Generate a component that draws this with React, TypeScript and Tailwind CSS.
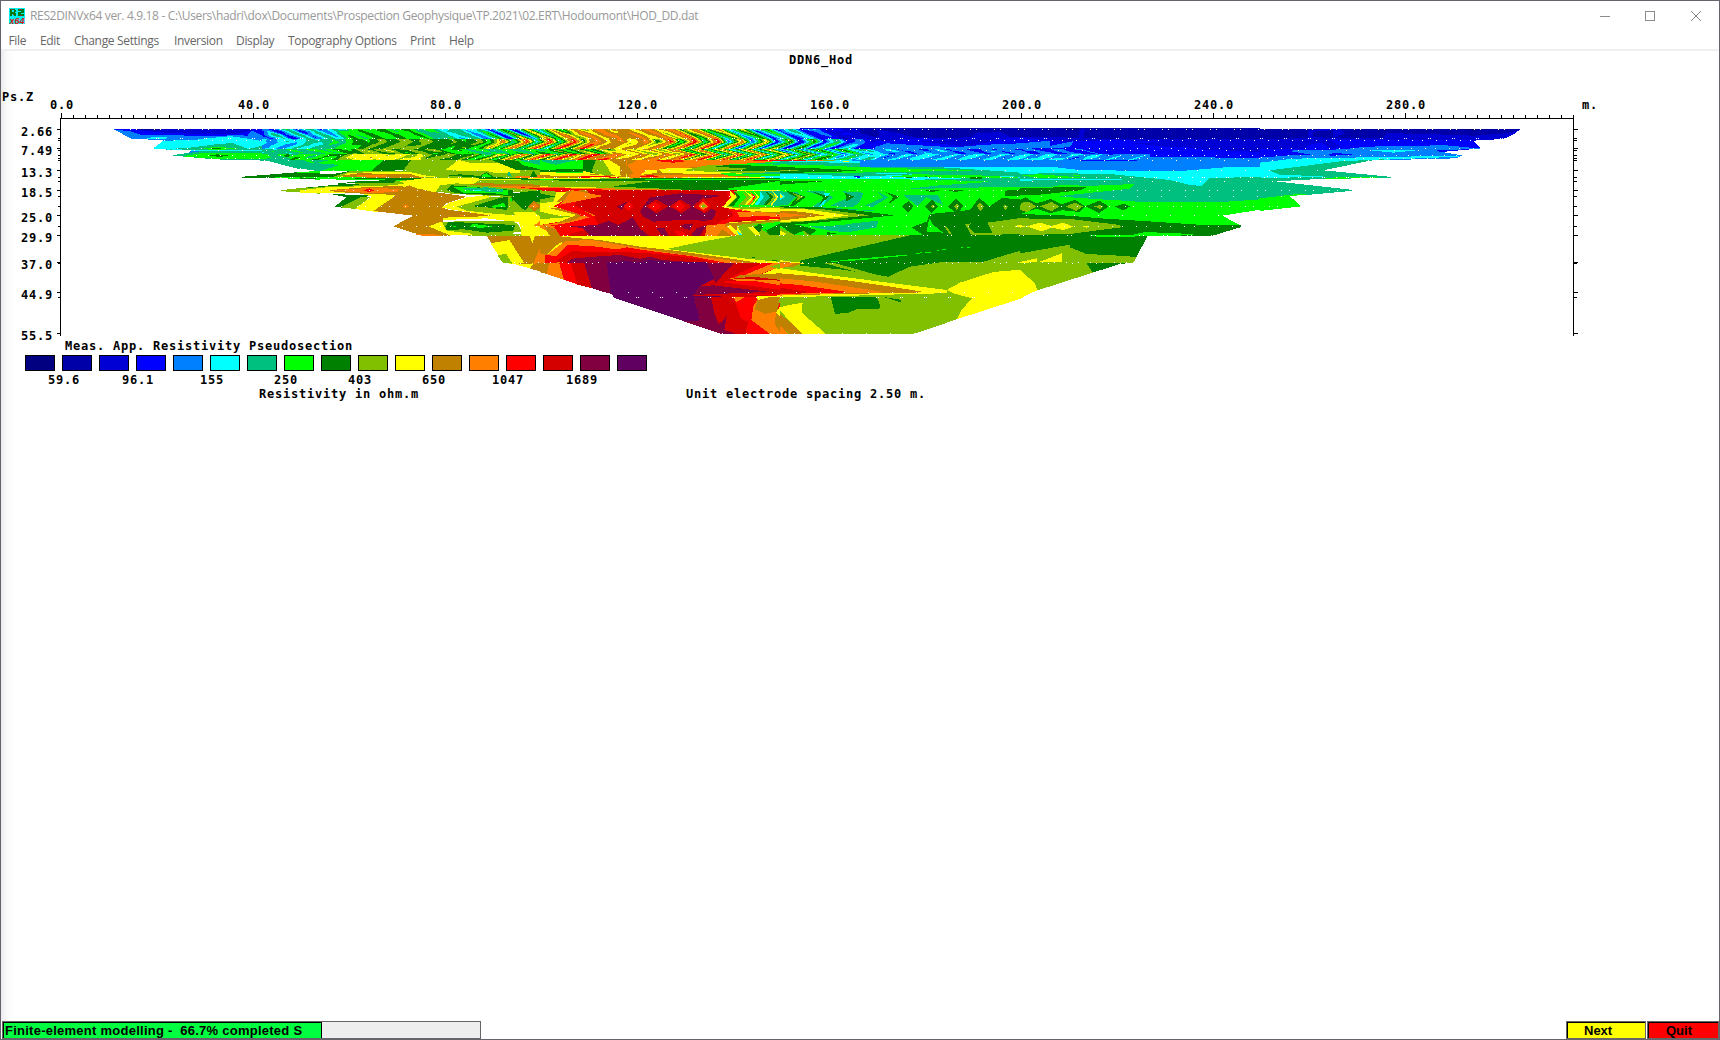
import React from "react";

const COLORS = [
  "#000080", "#0000a8", "#0000d4", "#0000ff", "#0080ff", "#00ffff", "#00c080", "#00ff00", "#008000",
  "#80c000", "#ffff00", "#c08000", "#ff8000", "#ff0000", "#d40000", "#800040", "#600060",
];
const KEYS = "abcdefghijklmnopq";
const color = (k: string) => (k === "w" ? "#ffffff" : COLORS[KEYS.indexOf(k)]);

/* Contour polygons, stored per tile in thirds of a pixel: "<level> x,y x,y ..." */
type Tile = { x: number; y: number; shapes: string };

const TILES: Tile[] = [
  {
    x: 0, y: 90, shapes: `
e 340,118 900,118 900,212 640,200 500,181 490,151 395,146
d 340,118 900,118 900,150 840,165 760,140 720,135 640,138 520,136 420,134 390,124
c 390,118 760,118 740,127 700,132 560,131 460,126
b 400,118 480,118 470,122
d 380,118 410,118 400,122
f 460,175 490,152 610,150 690,138 770,150 850,170 900,165 900,185 470,178
f 440,146 455,142 500,142 498,147
f 585,150 630,143 670,142 700,148
e 740,140 755,122 800,142 850,158 835,166 780,150
g 505,177 580,172 660,161 700,160 745,177 800,164 830,178 900,172 900,186 520,181
h 608,176 650,170 715,176 640,181
i 625,176 660,174 665,177
w 470,179 580,179 560,191 516,195
f 505,178 660,180 900,182 900,185 620,184
g 513,196 600,184 900,184 900,238 800,212 640,208
h 545,199 600,190 660,188 800,190 815,203 790,208 650,207
i 628,197 650,193 688,196 660,201
h 830,196 850,186 900,190 960,195 960,220 930,210 880,206
i 850,197 862,191 872,198 860,202
i 835,175 845,168 865,176 845,180
h 810,150 825,125 835,138 890,150 860,148
f 800,118 820,118 835,145 825,142
g 805,210 960,207 960,242
h 900,204 960,205 960,220
i 726,263 730,260 900,246 960,243 960,264 820,264
h 860,250 960,242 960,250
h 820,262 960,262 960,269 870,266
j 842,302 846,300 900,294 960,289 960,311 860,305
k 900,301 960,295 960,306` },
  {
    x: 300, y: 110, shapes: `
g 0,117 250,117 250,181 50,183 0,175
h 0,118 90,125 0,135
h 0,140 20,145 45,160 90,150 260,147 230,183 60,183 120,165 30,158 0,146
i 250,150 335,150 310,181 215,183
j 335,148 722,148 722,245 20,245 120,224 300,210 310,181
k 435,181 475,150 510,158 600,160 660,178 660,190 590,190 560,183
i 570,148 722,155 722,181 650,180 620,168
g 650,148 722,148 722,176 690,160
h 650,150 722,165 722,178 670,166
i 0,192 100,192 150,183 330,182 310,195 250,206 0,206
j 100,200 150,184 330,182 450,186 460,204 100,204
k 120,202 145,188 330,186 385,198 440,202
l 130,196 175,190 330,192 370,203 130,203
m 205,195 255,195 262,202 150,202
m 165,195 190,195 185,200
i 440,196 480,193 540,198 560,186 580,200 640,205 560,205
h 545,195 560,190 575,200 545,202
g 620,195 627,184 636,200
m 640,200 722,195 722,204 650,205
i 690,200 700,182 712,200
h 0,202 120,202 420,204 300,212 80,208
i 120,204 440,204 430,207 300,210 180,206
i 150,214 290,210 280,218 110,221
g 140,213 175,214 160,217
w 0,207 170,214 110,221 0,234
i 20,233 130,222 190,224 60,235
k 375,204 722,204 722,222 400,225 290,216
i 470,203 722,206 722,209 600,208
j 540,210 722,210 722,225 520,222
l 430,222 560,220 722,224 722,240 650,232 520,226
m 500,226 722,230 722,240
n 660,232 722,234 722,240
j 0,236 80,229 420,220 440,245 0,249
k 0,241 80,232 280,226 400,205 425,218 405,250 0,248
l 80,241 200,231 300,228 380,240 400,252 300,258 110,246
m 100,241 220,233 310,238 300,246 205,249 130,244
m 120,241 150,236 160,246
n 190,241 208,235 222,241 208,247
k 0,243 60,236 90,241 80,248 10,246
j 430,225 470,220 560,228 640,238 640,262 440,250 410,240
i 440,240 455,226 640,240 640,258 470,250
h 462,232 500,230 625,240 625,256 570,248 490,248
g 480,236 560,232 610,238 610,247 520,243
f 520,241 545,240 540,244
i 102,291 140,262 90,252 210,256 130,293
j 120,292 180,262 210,262 165,297
k 165,297 215,260 190,253 320,254 230,306
l 220,303 280,262 300,235 330,226 360,240 500,260 440,280 425,292 450,300 580,316 560,325 430,325 430,335 385,350 440,362 450,378 370,378 280,349 340,317
m 308,289 316,282 328,290 316,295
m 480,315 494,317 480,319
m 335,371 400,373 435,378 370,378
k 400,252 500,262 560,256 590,265 520,290 460,300 425,292 450,278 500,262
k 450,298 520,288 720,300 722,345 640,335 560,325 430,330 430,323 580,318
j 470,290 570,262 640,258 722,255 722,320 590,312 500,302
i 518,289 600,264 625,260 622,300 560,292
h 575,289 612,278 618,291 580,293
i 640,250 722,240 722,275 700,278 675,300 650,285 632,268
h 628,270 634,262 640,280
j 625,310 630,280 640,270 665,295 700,310 690,320
k 640,305 700,305 722,320 722,345 660,345
l 683,289 703,272 722,286 722,292 703,304
m 690,289 703,280 716,289 703,295
j 400,349 430,335 640,332 655,345 665,365 600,372 520,375 440,366
i 436,350 445,335 540,340 645,345 640,362 560,368 490,358 440,360
h 508,349 520,342 580,349 540,354
h 445,349 455,346 470,350
k 385,349 425,335 440,362 530,373 450,376
j 500,376 600,368 722,376 722,378 500,378
k 660,340 722,330 722,378 665,378
m 700,349 722,330 722,349
l 560,377 722,377 722,482 645,463 610,458
k 572,400 628,390 672,458 645,463 610,458
j 593,436 618,431 637,461 608,458
k 688,374 697,402 706,374
m 700,460 725,404 722,482
k 645,463 690,462 700,460 690,475
l 690,476 712,458 722,460 722,484` },
  {
    x: 540, y: 110, shapes: `
k 0,147 722,147 722,210 0,210
k 0,370 722,370 722,460 0,460
o 450,458 722,458 722,672 545,672 478,650 450,600
h 0,148 130,148 130,190 0,186
g 5,150 112,150 48,164 10,156
i 128,148 170,148 158,190 130,182
i 0,180 130,176 130,187 0,187
j 155,185 168,148 202,152 222,198 160,190
k 188,149 225,158 245,190 235,198 215,192
l 205,148 270,148 258,200 240,196 240,170
m 258,148 722,148 722,190 320,180 300,196 262,200
n 345,150 455,152 400,158 370,156
l 262,148 290,152 262,165 280,190 260,200
m 570,148 722,148 722,160 560,162
n 630,149 722,148 722,152 640,152
l 350,180 560,164 722,156 722,200 350,200
k 355,176 500,173 722,166 722,198 600,192 370,190
j 430,181 500,166 722,160 722,192 520,186
i 508,168 722,160 722,182 560,172
h 540,165 722,155 722,170 620,166
g 620,162 722,157 722,164
f 690,155 722,152 722,156
i 470,184 722,174 722,182
l 0,190 200,194 260,200 340,190 600,200 0,204
k 0,190 130,192 240,200 0,196
n 110,200 190,197 240,203 120,203
m 280,195 560,196 600,202 270,203
n 300,197 340,196 360,201 300,201
g 600,190 722,186 722,196 660,196
h 540,190 722,192 722,202 570,198
f 630,201 722,197 722,204
j 0,204 722,204 722,240 0,240
k 0,204 200,202 240,205 0,207
h 0,207 330,206 300,209 0,209
i 0,209 400,204 722,204 722,242 480,241 210,229 335,214 0,211
j 0,213 335,214 210,230 0,229
h 300,207 722,207 722,209 320,209
h 560,236 722,212 722,245 575,242
k 0,229 240,234 0,236
m 0,231 200,235 480,241 0,242
n 0,234 250,238 0,240
n 0,240 500,240 580,245 590,378 0,378
o 130,244 230,240 570,243 575,262 550,290 580,318 520,345 500,378 70,378 75,340 170,320 100,289
j 0,241 50,245 60,260 30,280 0,280
i 0,250 46,260 0,268
k 50,246 110,244 100,262 70,272 50,285 0,300 0,280 40,275
l 80,244 140,240 150,255 90,270 50,276
m 95,240 190,258 120,272 60,284 70,275
k 0,300 40,285 120,312 80,332 0,345
j 0,305 60,318 100,320 0,328
l 30,295 90,296 140,330 90,345 0,352 60,335 110,315
m 60,296 100,289 165,316 100,350 0,378 0,345 90,335 130,316
n 40,289 100,284 160,318 180,350 60,378 70,350 15,349 80,340 150,322
n 46,289 100,286 105,293 80,296
n 60,376 40,350 90,350 90,378
k 0,352 20,362 40,378 0,378
l 10,345 50,360 60,378 30,378
p 300,304 330,262 420,250 545,257 490,268 520,300 572,316 500,332 420,330 340,335 310,320
p 230,289 262,275 245,300
o 318,289 348,268 385,289 350,310
n 325,289 345,275 365,290 345,303
o 388,289 420,268 455,289 425,310
n 398,289 418,272 435,290 420,303
o 458,290 490,262 525,289 495,310
n 468,289 490,266 512,289 492,306
m 476,289 490,275 504,289 490,300
j 484,289 490,282 498,289 490,295
n 250,289 268,274 280,289 268,303
p 90,349 170,345 205,333 235,345 278,322 300,355 328,378 150,378 130,355
p 350,355 375,355 385,378 365,376
p 420,345 460,340 450,360 430,355
p 470,355 500,345 480,378 450,376
n 400,360 430,365 440,378 415,378
k 575,240 722,240 722,378 590,378
o 545,262 570,241 590,241 585,262 560,300 780,330 540,340 520,378 500,378
n 560,245 585,244 590,262 565,290 590,300 722,312 722,335 590,330 540,345 520,378 505,378 520,345 580,318
m 555,292 640,302 722,311 722,320 600,320 700,316
k 545,290 570,275 590,245 722,245 722,302 640,300 560,295
j 560,290 590,262 580,243 722,243 722,298 600,292
g 600,244 722,243 722,295 610,288
h 590,243 660,243 670,258 650,288 580,290 600,262
k 570,243 590,260 560,289 550,289 572,262
i 580,243 605,260 580,289 565,289 592,262
h 590,243 613,260 590,289 580,289 600,262
j 605,243 632,260 612,289 592,289 620,262
k 615,243 642,260 620,289 610,289 632,262
m 628,245 650,260 626,289 618,289 640,262
n 637,252 647,260 640,270 640,262
k 640,243 658,260 635,289 628,289 652,262
f 660,243 672,260 650,289 640,289 660,262
i 676,243 702,260 676,289 666,289 690,262
j 685,243 708,260 684,289 676,289 700,262
k 696,243 716,260 694,289 688,289 708,262
h 600,285 722,287 722,292 600,291
j 570,292 722,290 722,300 640,300
k 600,296 722,295 722,308 640,306
m 590,305 722,309 722,320 600,322
l 640,304 722,306 722,312
n 520,335 620,320 722,316 600,330
k 560,338 722,326 722,378 560,378
l 520,360 560,340 722,328 722,335 590,348 590,378 500,378
m 500,345 560,342 530,378 495,378
j 590,345 722,332 722,378 610,378
h 640,345 722,335 722,378 700,378
i 630,360 660,340 680,360 722,340 722,378 690,378 670,350 650,378
k 640,350 665,378 650,378 620,350
k 570,345 610,378 592,378 560,350
m 560,350 590,378 575,378 545,355
f 590,362 612,378 600,378
l 0,377 62,377 78,390 50,405 20,436 0,430
k 60,377 600,377 380,415 722,455 722,460 640,460
j 380,417 480,396 590,376 722,376 722,456 620,446
i 630,441 650,443 640,444
i 680,450 722,452 722,454
l 62,380 180,390 300,410 420,424 560,444 660,459 500,459 80,440
m 0,430 20,435 78,392 160,391 290,413 420,433 560,450 620,460 0,460
n 15,435 50,438 82,405 155,408 230,418 260,412 330,423 450,438 560,459 16,459
o 50,452 95,424 150,425 230,425 360,432 470,446 530,459 50,459
p 80,459 95,446 190,438 240,435 300,446 330,440 370,450 440,455 480,459
q 220,459 240,454 300,455 330,450 380,455 500,458
l 0,459 28,459 30,470 20,492 0,487
m 28,459 60,457 75,510 20,492
n 57,458 95,458 115,524 72,510
o 92,458 132,458 160,536 112,524
p 132,458 202,458 216,552 195,547 156,535
q 200,457 502,457 525,505 480,528 545,560 462,562 480,628 472,632 440,634 430,633 225,565 212,550
p 500,459 585,459 600,478 570,505 525,518 520,500
o 583,459 668,459 650,480 640,490 580,515 520,525 530,515
n 668,459 705,459 660,495 570,505 600,488
m 700,459 722,459 722,470 640,500 590,505
k 660,494 722,470 722,490
j 690,470 722,460 722,478
l 600,495 722,490 722,510 640,500 580,505
m 570,505 722,512 722,530 600,516
n 550,512 640,512 722,526 722,542 560,522
o 520,522 560,518 722,540 722,552 600,552 480,530
p 478,529 520,526 700,547 600,552 460,557
o 460,555 722,544 722,555 460,558
n 560,555 722,551 722,557
k 640,560 722,556 722,562 600,562
p 462,560 515,560 530,620 540,642 560,618 553,660 590,672 545,672 428,633 474,632 480,628
n 580,562 722,562 722,672 620,672
o 512,560 585,560 560,614 536,642 525,615
o 565,612 625,635 615,672 555,655
m 578,562 615,560 590,576
m 640,590 655,562 712,606 705,640 742,672 690,672 634,630
l 655,562 722,562 712,604 675,612 645,598
k 648,560 690,561 655,570
j 722,562 722,585 715,575
k 722,585 722,620 708,608
l 708,608 722,620 722,672 704,640
l 704,632 722,640 722,655` },
  {
    x: 780, y: 110, shapes: `
h 0,238 722,238 722,378 0,378
f 0,146 722,146 722,205 0,205
e 160,146 722,146 722,155 520,165 460,153 380,165 260,156
f 455,155 480,140 640,148 722,168 722,184 560,176
e 700,154 722,145 722,175
n 0,148 60,149 80,152 0,155
m 40,150 160,151 120,153
j 120,148 170,152 220,154 130,152
k 188,154 207,154 207,156 188,156
m 242,156 254,156 254,158 242,158
g 0,154 100,156 320,163 500,173 610,180 722,188 722,215 0,215
h 0,163 120,166 280,173 600,181 300,187 0,190
i 0,171 90,174 235,181 150,187 0,188
j 0,180 60,181 20,184 0,184
f 0,193 220,192 400,188 722,188 722,204 0,204
g 0,190 60,190 320,192 400,190 722,188 722,200 400,193 240,200
h 330,200 400,193 580,195 722,203 500,203
i 365,201 400,201 390,204
i 420,201 440,199 450,203
i 570,202 605,202 605,207 570,206
d 222,199 240,199 240,203 222,202
f 0,204 722,206 722,209 0,208
h 0,208 360,208 722,214 722,245 0,245
g 420,208 722,208 722,231 560,233 370,238 480,226 640,215
i 0,213 132,214 0,224
f 0,200 40,200 40,205 0,205
g 80,244 130,244 160,262 120,292 95,292 140,262
g 0,244 60,248 20,289 0,289
g 190,244 250,248 240,275 220,292 150,288 205,262
g 290,244 325,262 280,290 250,289 310,262
g 370,255 475,256 490,286 440,262 412,288
f 130,248 150,248 130,285 118,290 138,262
f 0,248 15,260 0,270
k 0,252 8,260 0,266
i 20,242 78,260 40,289 28,289 50,262 25,250
j 35,248 70,260 45,275 55,262
i 95,244 148,260 120,282 130,262
i 195,248 222,260 200,274
i 315,245 358,260 325,282 340,262
i 365,289 385,274 400,289 385,308
i 435,290 455,268 475,290 455,310
j 452,289 460,284 466,290 460,295
i 505,290 527,265 550,289 530,312
j 522,289 530,280 538,289 530,300
i 570,300 598,263 628,290 665,264 722,268 722,376 430,376 395,352 395,330 450,312
j 590,289 600,278 612,289 602,304
j 668,289 676,284 684,290 676,300
j 718,289 722,287 722,292
i 675,242 722,238 722,258 675,257
i 434,240 478,241 455,247
i 500,240 552,241 527,246
h 0,285 300,300 400,310 450,312 440,335 395,352 430,376 0,376
g 0,289 130,292 290,302 300,304 180,298
i 0,289 110,291 200,298 345,316 200,330 90,340 0,347
j 0,292 130,298 270,316 130,330 0,340
k 0,296 80,298 208,316 90,332 0,336
l 0,302 60,305 135,316 60,325 0,332
m 0,308 80,316 0,323
g 90,349 180,346 220,340 295,332 290,352 200,367 150,362
i 0,345 60,346 110,360 90,376 70,362 40,376 20,360
j 0,352 20,362 45,376 0,376
k 0,362 20,372 10,376 0,376
j 68,360 90,376 75,376
i 142,366 178,372 142,374
h 440,365 448,325 460,345 490,368
j 490,345 500,350 518,376 508,372
j 555,342 575,340 565,350 590,376 572,372
j 622,338 722,324 722,372 575,376 578,368 635,368
i 595,338 622,338 636,366 590,362
k 700,349 722,344 722,352
j 0,376 722,376 722,672 0,672
i 60,452 390,376 722,376 722,422 700,428 605,457 480,457 390,470 325,500 180,478 60,467
j 130,459 160,458 310,500 290,502
h 130,457 210,448 380,434 380,437 250,450
h 408,429 426,427 426,430 408,432
h 436,426 452,425 452,428 436,429
h 462,422 478,421 478,423 462,424
h 487,418 497,418 497,420 487,420
h 514,416 523,416 523,418 514,418
h 538,413 550,412 550,414 538,415
h 562,411 571,410 571,413 562,413
h 587,408 596,407 596,409 587,409
k 722,456 722,460 720,459
k 0,450 40,456 80,459 0,475
l 0,456 68,459 20,478 0,478
m 0,459 45,459 20,472 0,474
j 0,474 30,470 70,480 0,480
k 0,474 120,492 500,540 500,550 0,557
l 0,490 120,500 300,525 440,547 0,556
m 0,505 100,514 320,547 0,554
n 0,520 60,525 210,547 0,552
o 0,533 95,547 0,550
m 0,553 50,553 0,557
k 0,557 500,548 300,555 0,562
k 500,540 540,518 640,486 722,479 722,567 530,628 545,600 575,565 520,550
i 152,560 290,560 300,585 298,597 235,596 205,608 165,612
i 308,560 365,570 362,577
k 0,590 68,578 65,608 138,672 60,672 0,600
l 0,612 45,648 68,672 30,672 0,650
m 0,645 25,672 0,672
j 0,562 20,562 10,590 0,590
w 402,672 530,628 722,566 722,680 402,680` },
  {
    x: 1020, y: 110, shapes: `
e 0,135 722,142 722,190 0,190
f 0,160 180,180 470,184 722,163 722,245 0,215
g 0,192 110,189 280,193 450,210 510,225 545,228 570,203 722,202 722,300 0,300
h 0,195 60,193 200,204 60,205
h 160,195 180,195 180,199 160,199
f 0,206 295,208 440,214 0,212
g 0,209 380,210 440,214 100,216
h 0,231 200,228 345,222 330,236 110,259 200,264 350,275 620,275 722,268 722,302 610,317 670,346 0,380
h 115,225 200,226 115,228
g 120,260 260,255 330,236 360,260 480,265 360,274 240,268
i 0,234 200,231 180,241 60,254 0,256
i 0,270 16,262 50,280 92,267 125,283 165,269 195,289 170,313 130,300 90,310 50,296 0,312
j 0,289 5,278 25,275 50,289 22,306 0,300
j 60,289 95,276 118,289 95,304
j 138,289 165,278 190,289 168,303
i 195,289 238,272 266,289 238,309
j 222,289 240,285 250,290 240,297
i 285,290 312,281 330,290 310,301
h 80,316 150,302 200,310 180,322
i 0,312 150,317 240,325 400,335 550,345 664,345 664,351 575,378 383,378 340,458 300,462 218,488 180,460 0,460
j 0,325 160,328 300,345 305,352 240,360 150,372 0,375
k 20,349 60,338 95,348 130,338 160,350 130,360 95,353 65,364
k 0,345 18,350 0,353
k 188,349 200,347 210,350 200,353
h 205,376 340,374 375,366 520,372 518,375 450,378 240,381
j 0,430 70,418 148,404 150,412 200,432 280,436 350,441 340,458 200,460 218,488 50,542 0,560
k 0,456 50,445 52,455 0,460
k 60,455 125,430 125,457
k 0,480 45,520 52,542 30,550 0,567
w 0,568 35,548 218,490 340,460 383,380 383,400 722,400 722,600 0,600
w 722,299 607,317 668,350 578,378 722,378` },
  {
    x: 1260, y: 90, shapes: `
c 0,116 785,116 760,133 730,147 640,152 664,175 0,180
b 0,116 785,116 740,130 640,137 480,131 380,130 370,144 0,146
c 145,120 240,116 255,130 220,145 145,147
b 160,125 220,120 220,145 160,140
a 610,117 660,117 640,122
d 0,178 140,178 145,165 220,150 635,150 664,175 500,190 0,202
c 180,153 215,150 240,170 210,176
e 0,203 100,195 160,195 80,182 250,178 300,172 370,168 560,166 665,176 520,182 608,196 590,205 0,220
d 205,195 220,188 290,195 210,197
f 330,181 470,181 400,188
f 0,218 100,206 590,197 600,200 330,211 190,241 0,262
g 30,241 240,214 390,207 330,212 190,241 398,261 390,263 160,268 45,274 280,300 270,303 150,314 90,318 0,326 0,262 65,258
f 50,256 188,257 188,262 0,263
h 195,263 250,262 395,261 250,266 195,267
h 0,325 120,311 150,312 90,319 124,349 0,363` },
];

/* Shallow-level apparent resistivity: per row [x, low level, high level] stops. */
type Stop = [number, number, number];
const BANDS: { y0: number; y1: number; jitter: number; slant: (t: number) => number; stops: Stop[] }[] = [
  {
    y0: 129, y1: 139, jitter: 1.6, slant: (t) => 4 + 24 * t,
    stops: [[262, 3, 4.4], [272, 3, 6.5], [295, 3, 6.5], [335, 4, 6.5], [350, 6.6, 8], [400, 7, 8.4], [430, 6.4, 7.8], [442, 5.2, 6.6],
      [480, 4, 6.4], [492, 3, 8], [520, 2.4, 10.5], [545, 5, 11], [570, 8, 12], [595, 10, 12.6], [615, 10.8, 11.8],
      [650, 10, 12], [675, 9, 12.6], [700, 7, 12.4], [720, 5, 11.4], [750, 4, 9.5], [780, 3, 7], [810, 2.4, 5], [840, 2, 3.2], [860, 1.6, 2.4]],
  },
  {
    y0: 139, y1: 149, jitter: 1.6, slant: (t) => (t < 0.25 ? 26 + t * 12 : 29 - (t - 0.25) * 26),
    stops: [[262, 4, 5.4], [300, 4.6, 5.8], [335, 6, 7], [360, 7.4, 8.6], [400, 8.4, 9.6], [430, 8, 8.8], [470, 7.4, 8.6],
      [485, 7, 10], [510, 6, 12.5], [545, 5, 13.5], [580, 8, 14], [600, 10.6, 12.2], [640, 10, 11.6], [675, 7, 13],
      [700, 6, 14], [730, 4, 13], [760, 3, 11], [800, 2.7, 9], [835, 2.6, 7], [860, 2.5, 4.2], [875, 2.2, 3.2]],
  },
  {
    y0: 149, y1: 154, jitter: 2, slant: (t) => 6 + 20 * t,
    stops: [[262, 5.4, 6.4], [320, 6, 7], [360, 8, 9.4], [430, 8, 9.4], [460, 7, 8.4], [490, 6, 7.4], [540, 6, 8],
      [600, 7, 10], [620, 10, 11], [670, 9, 12], [700, 6, 12], [750, 5, 12], [790, 4, 10], [860, 4, 7], [880, 3.6, 4.8], [960, 3.4, 4.6], [1100, 3.2, 4.2]],
  },
  {
    y0: 154, y1: 160, jitter: 1.8, slant: (t) => 26 - 20 * t,
    stops: [[290, 6.4, 7.4], [330, 7, 8.4], [355, 9.6, 10.4], [420, 9.6, 10.4], [426, 8.6, 9.3], [470, 7.6, 9], [490, 6, 10.5],
      [520, 7, 12], [560, 8, 13.6], [600, 11, 13.4], [625, 10, 12], [670, 10, 12.6], [700, 7, 13.5], [750, 5, 13],
      [800, 5, 10], [850, 4.6, 7], [880, 4, 5.4], [960, 4, 5.4], [1100, 4, 5.2], [1150, 3.6, 4.6]],
  },
];

/* Smooth value noise; spreads cells widely along x and tightly along depth. */
const hash = (i: number, j: number) => {
  const v = Math.sin(i * 127.1 + j * 311.7) * 43758.5453;
  return v - Math.floor(v);
};
const noise = (x: number, y: number) => {
  const i = Math.floor(x);
  const j = Math.floor(y);
  const u = x - i;
  const v = y - j;
  const top = hash(i, j) * (1 - u) + hash(i + 1, j) * u;
  const bottom = hash(i, j + 1) * (1 - u) + hash(i + 1, j + 1) * u;
  return top * (1 - v) + bottom * v - 0.5;
};

function contourRuns() {
  const paths: string[] = COLORS.map(() => "");
  for (const band of BANDS) {
    const { stops } = band;
    const first = stops[0][0];
    const last = stops[stops.length - 1][0];
    for (let y = band.y0; y < band.y1; y++) {
      const t = (y - band.y0) / (band.y1 - band.y0);
      let start = first;
      let prev = -1;
      for (let x = first; x <= last; x++) {
        let i = 0;
        while (i < stops.length - 2 && stops[i + 1][0] < x) i++;
        const f = (x - stops[i][0]) / (stops[i + 1][0] - stops[i][0]);
        const lo = stops[i][1] + f * (stops[i + 1][1] - stops[i][1]);
        const hi = stops[i][2] + f * (stops[i + 1][2] - stops[i][2]);
        const p = ((((x - band.slant(t) - 4) % 24) + 24) % 24) / 24;
        const wave = p < 0.6 ? p / 0.6 : (1 - p) / 0.4;
        const amp = Math.min(1, 0.45 + (hi - lo) / 5);
        const value = lo + (hi - lo) * wave + 0.3 + band.jitter * amp * noise(x / 14, y / 3.2);
        const level = x === last ? -1 : Math.max(0, Math.min(14, Math.floor(value)));
        if (level !== prev) {
          if (prev >= 0) paths[prev] += `M${start} ${y}h${x - start}v1h${start - x}z`;
          start = x;
          prev = level;
        }
      }
    }
  }
  return paths;
}
const RUNS = contourRuns();

/* Blue upper levels on the right flank, drawn under the wave bands. */
const UPPER = `
c 2400,385 3780,385 3780,480 2400,480
b 2520,385 3780,385 3780,416 3300,416 3180,412 2900,412 2780,416 2620,410
a 3180,385 3240,385 3230,392
c 2630,388 2640,400 2630,415 2760,416 2700,400
c 2900,416 2930,400 3000,396 3030,408 3010,416
c 3240,388 3256,386 3250,414 3236,414
d 2500,418 2640,424 2760,414 2900,420 3060,414 3200,425 3330,420 3480,424 3600,448 3780,456 3780,480 2400,480
c 2760,424 2900,440 3000,418 2860,418
c 3400,430 3520,424 3780,425 3780,450 3500,440
e 2580,455 2660,430 2760,436 2860,442 2960,434 3060,430 3150,422 3150,438 3220,424 3210,442 3080,446 3240,462 3420,470 3780,474 3780,500 2580,500
f 2630,452 2700,446 2660,470
f 2670,460 2780,450 2740,468
f 2840,454 2900,448 2850,460
f 2580,466 2700,462 2900,466 3080,456 3260,470 3340,480 2580,480
d 3085,451 3160,450 3180,455 3090,456
g 3070,472 3110,468 3130,475 3100,478
g 3160,474 3200,472 3200,478
d 3240,480 3410,480 3410,483 3240,483`;

type DotRow = [number, number[], number, number];
const DOTS: DotRow[] = [
  [129, [67, 13], 130, 1505], [138, [1, 7], 140, 1505], [140, [55, 25], 150, 1490], [148, [20, 62], 165, 1480],
  [150, [41], 190, 1440], [155, [47, 11], 190, 1460], [158, [70, 20], 200, 1440], [160, [37], 220, 1400],
  [170, [28], 300, 1340], [177, [41, 47, 13], 260, 1380], [181, [37], 480, 1285], [190, [64, 16], 300, 1350], [196, [64], 355, 1300],
  [206, [28, 52], 340, 1290], [215, [61], 412, 800], [215, [19], 800, 1230], [226, [61, 19], 395, 1240],
  [235, [70, 9], 425, 1215], [262, [31, 67], 500, 1130], [263, [13], 500, 1130], [292, [49], 605, 1035],
  [297, [1, 7], 620, 980], [333, [43], 720, 915],
];
const dotPath = DOTS.map(([y, offs, from, to]) => {
  let d = "";
  for (const o of offs) for (let x = Math.round(o / 3) + 12; x < to; x += 24) if (x >= from) d += `M${x} ${y}h1v1h-1z`;
  return d;
}).join("");

const parse = (s: string) =>
  s.trim().split("\n").map((l) => ({ fill: color(l[0]), points: l.slice(2) }));

const LABELED: [string, number, number][] = [
  ["2.66", 129, 136], ["7.49", 148, 155], ["13.3", 170, 177], ["18.5", 190, 197], ["25.0", 215, 222],
  ["29.9", 235, 242], ["37.0", 262, 269], ["44.9", 292, 299], ["55.5", 333, 340],
];
const MINOR = [138, 140, 150, 155, 158, 160, 177, 181, 196, 206, 226, 263, 297];

const MONO =
  "font-['DejaVu_Sans_Mono','Liberation_Mono',monospace] font-bold text-[12px] tracking-[0.775px] whitespace-pre text-black";

function Pseudosection() {
  return (
    <svg width="1718" height="291" viewBox="1 51 1718 291" className={`block shrink-0 ${MONO}`} shapeRendering="crispEdges">
      <g fill="#000">
        <text x="789" y="64">DDN6_Hod</text>
        <text x="2" y="101">Ps.Z</text>
        <text x="1582" y="109">m.</text>
        {Array.from({ length: 8 }, (_, i) => (
          <text key={i} x={62 + 192 * i} y="109" textAnchor="middle">{(i * 40).toFixed(1)}</text>
        ))}
        {LABELED.map(([t, , y]) => (
          <text key={t} x="21" y={y}>{t}</text>
        ))}
      </g>
      <g fill="#000">
        <rect x="60" y="118" width="1514" height="1" />
        <rect x="60" y="118" width="1" height="218" />
        <rect x="1573" y="115" width="1" height="221" />
        {Array.from({ length: 127 }, (_, i) => {
          const h = i % 16 === 0 ? 5 : 3;
          return <rect key={i} x={61 + i * 12} y={118 - h} width="1" height={h} />;
        })}
        {LABELED.map(([t, y]) => (
          <g key={t}>
            <rect x="57" y={y} width="3" height="1" />
            <rect x="1574" y={y} width="4" height="1" />
          </g>
        ))}
        {MINOR.map((y) => (
          <g key={y}>
            <rect x="58" y={y} width="2" height="1" />
            <rect x="1574" y={y} width="3" height="1" />
          </g>
        ))}
      </g>
      {TILES.map((tile) => (
        <g key={tile.x} transform={`translate(${tile.x} ${tile.y}) scale(${1 / 3})`}>
          {parse(tile.shapes).map((s, i) => (
            <polygon key={i} fill={s.fill} points={s.points} />
          ))}
        </g>
      ))}
      <g transform={`scale(${1 / 3})`}>
        {parse(UPPER).map((s, i) => (
          <polygon key={i} fill={s.fill} points={s.points} />
        ))}
      </g>
      {RUNS.map((d, i) => (d ? <path key={i} d={d} fill={COLORS[i]} /> : null))}
      <path d={dotPath} fill="#fff" />
    </svg>
  );
}

const LEGEND = ["59.6", "96.1", "155", "250", "403", "650", "1047", "1689"];

function Legend() {
  return (
    <div className={`flex flex-col ${MONO} leading-[14px]`}>
      <div className="-mt-[3px] h-[15px] pl-[64px]">Meas. App. Resistivity Pseudosection</div>
      <div className="mt-px flex gap-[7px] pl-[24px]">
        {COLORS.map((c) => (
          <div key={c} className="h-4 w-[30px] border border-black" style={{ background: c }} />
        ))}
      </div>
      <div className="mt-[2px] flex pl-[26px]">
        {LEGEND.map((l) => (
          <div key={l} className="w-[74px] text-center">{l}</div>
        ))}
      </div>
      <div className="flex pl-[258px]">
        <div className="w-[427px]">Resistivity in ohm.m</div>
        <div>Unit electrode spacing 2.50 m.</div>
      </div>
    </div>
  );
}

function AppIcon() {
  return (
    <svg width="16" height="16" viewBox="0 0 16 16" shapeRendering="crispEdges">
      <rect width="16" height="16" fill="#00f0f0" />
      <path fill="#007a10" fillRule="evenodd" d="M1 1h5v1h1v2h-1v1h1v3H5V6H3v2H1zM3 2v2h2V2zM9 1h6v4h-3v1h3v2H9V4h3V3H9z" />
      <path fill="#903030" d="M2 1h2v1H2zM10 1h3v1h-3zM4 6h1v1H4zM11 7h2v1h-2z" />
      <text x="0.5" y="15.500" textLength="15" lengthAdjust="spacingAndGlyphs" className="font-['Liberation_Sans',sans-serif] text-[9px] font-bold italic" fill="#e01818">x64</text>
    </svg>
  );
}

const MENU: [string, string][] = [
  ["File", "w-[31.5px]"], ["Edit", "w-[34px]"], ["Change Settings", "w-[100px]"], ["Inversion", "w-[62px]"],
  ["Display", "w-[52px]"], ["Topography Options", "w-[122px]"], ["Print", "w-[39px]"], ["Help", "w-[40px]"],
];

export default function App() {
  return (
    <div className="flex h-[1040px] w-[1720px] flex-col overflow-hidden border border-[#66636c] bg-white font-['Open_Sans','Noto_Sans',sans-serif] text-[12px]">
      <div className="flex h-[29px] shrink-0 items-center pl-2">
        <AppIcon />
        <div className="ml-[5px] grow whitespace-pre tracking-[-0.345px] text-[#999]">
          RES2DINVx64 ver. 4.9.18 - C:\Users\hadri\dox\Documents\Prospection Geophysique\TP.2021\02.ERT\Hodoumont\HOD_DD.dat
        </div>
        <svg width="120" height="28" viewBox="1599 1 120 28" fill="none" stroke="#8c8c8c" shapeRendering="crispEdges">
          <path d="M1600 15.500h10M1645.500 10.500h9v9h-9z" />
          <path d="M1691 10l10 10M1701 10l-10 10" shapeRendering="auto" />
        </svg>
      </div>
      <div className="flex h-[21px] shrink-0 items-center border-b-2 border-[#f0f0f0] pl-[7.5px] pt-[2px] tracking-[-0.33px] text-[#666]">
        {MENU.map(([label, w]) => (
          <div key={label} className={`${w} shrink-0 whitespace-nowrap`}>{label}</div>
        ))}
      </div>
      <div className="flex grow flex-col bg-[linear-gradient(90deg,#ebebeb_0,#fafafa_6px,#fff_13px)]">
        <Pseudosection />
        <Legend />
      </div>
      <div className="flex h-[18px] shrink-0 justify-between font-['Liberation_Sans',sans-serif] text-[13px] font-bold leading-[16px] text-black">
        <div className="ml-px flex w-[479px] border border-[#666] bg-[#eee]">
          <div className="w-[319px] whitespace-pre border-l border-r border-t border-black bg-[#00ff40] pl-px tracking-[0.25px]">
            Finite-element modelling -  66.7% completed S
          </div>
        </div>
        <div className="flex gap-px">
          <div className="w-[80px] border border-[#666]">
            <div className="h-full border-l border-t border-black bg-[#ffff00] pl-[16px] leading-[15px]">Next</div>
          </div>
          <div className="w-[72px] border border-[#666]">
            <div className="h-full border-l border-t border-black bg-[#ff0000] pl-[17px] leading-[15px]">Quit</div>
          </div>
        </div>
      </div>
    </div>
  );
}
